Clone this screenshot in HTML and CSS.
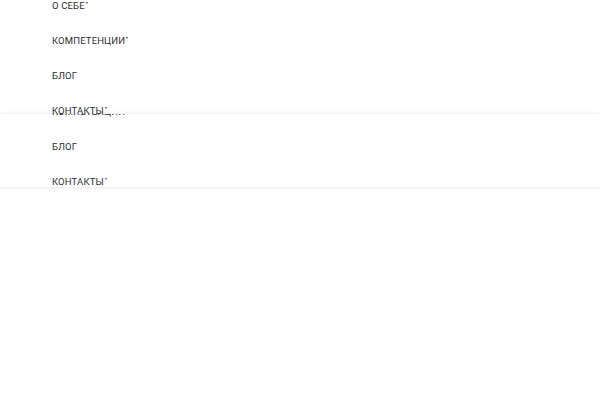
FILE: index.html
```html
<!DOCTYPE html>
<html lang="ru">
<head>
<meta charset="utf-8">
<title>Меню</title>
<link rel="stylesheet" href="styles.css">
</head>
<body>
<ul class="menu menu-main">
  <li><a href="#">О СЕБЕ</a><span class="caret"></span></li>
  <li><a href="#">КОМПЕТЕНЦИИ</a><span class="caret"></span></li>
  <li><a href="#">БЛОГ</a></li>
  <li><a href="#">КОНТАКТЫ</a><span class="caret"></span></li>
</ul>
<header class="bar">
  <ul class="menu menu-bar">
    <li><a href="#">КОМПЕТЕНЦИИ</a><span class="caret"></span></li>
    <li><a href="#">БЛОГ</a></li>
    <li><a href="#">КОНТАКТЫ</a><span class="caret"></span></li>
  </ul>
</header>
</body>
</html>
```
FILE: styles.css
```css
html, body {
  margin: 0;
  padding: 0;
  background: #fff;
}
body {
  font-family: Roboto, "Liberation Sans", sans-serif;
  font-size: 9.5px;
  color: #333;
  width: 600px;
  height: 400px;
  overflow: hidden;
  position: relative;
}
.menu {
  list-style: none;
  margin: 0;
  padding: 0 0 0 52px;
}
.menu li {
  height: 35px;
  line-height: 35px;
  display: flex;
  align-items: center;
}
.menu a {
  color: #2e2e2e;
  text-decoration: none;
  font-weight: 400;
  letter-spacing: 0.15px;
}
.caret {
  display: inline-block;
  width: 0;
  height: 0;
  border-left: 1.5px solid transparent;
  border-right: 1.5px solid transparent;
  border-top: 2px solid #444;
  margin-left: 1px;
  margin-top: -5px;
}
.menu-main {
  margin-top: -12px;
  position: relative;
  z-index: 2;
}
.bar {
  position: absolute;
  top: 113px;
  left: 0;
  width: 600px;
  height: 73px;
  background: #fff;
  box-shadow: 0 0 3px rgba(0,0,0,0.08);
  border-top: 1px solid #f2f2f2;
  border-bottom: 1px solid #f2f2f2;
  overflow: hidden;
  z-index: 1;
}
.menu-bar {
  margin-top: -20px;
}
```
